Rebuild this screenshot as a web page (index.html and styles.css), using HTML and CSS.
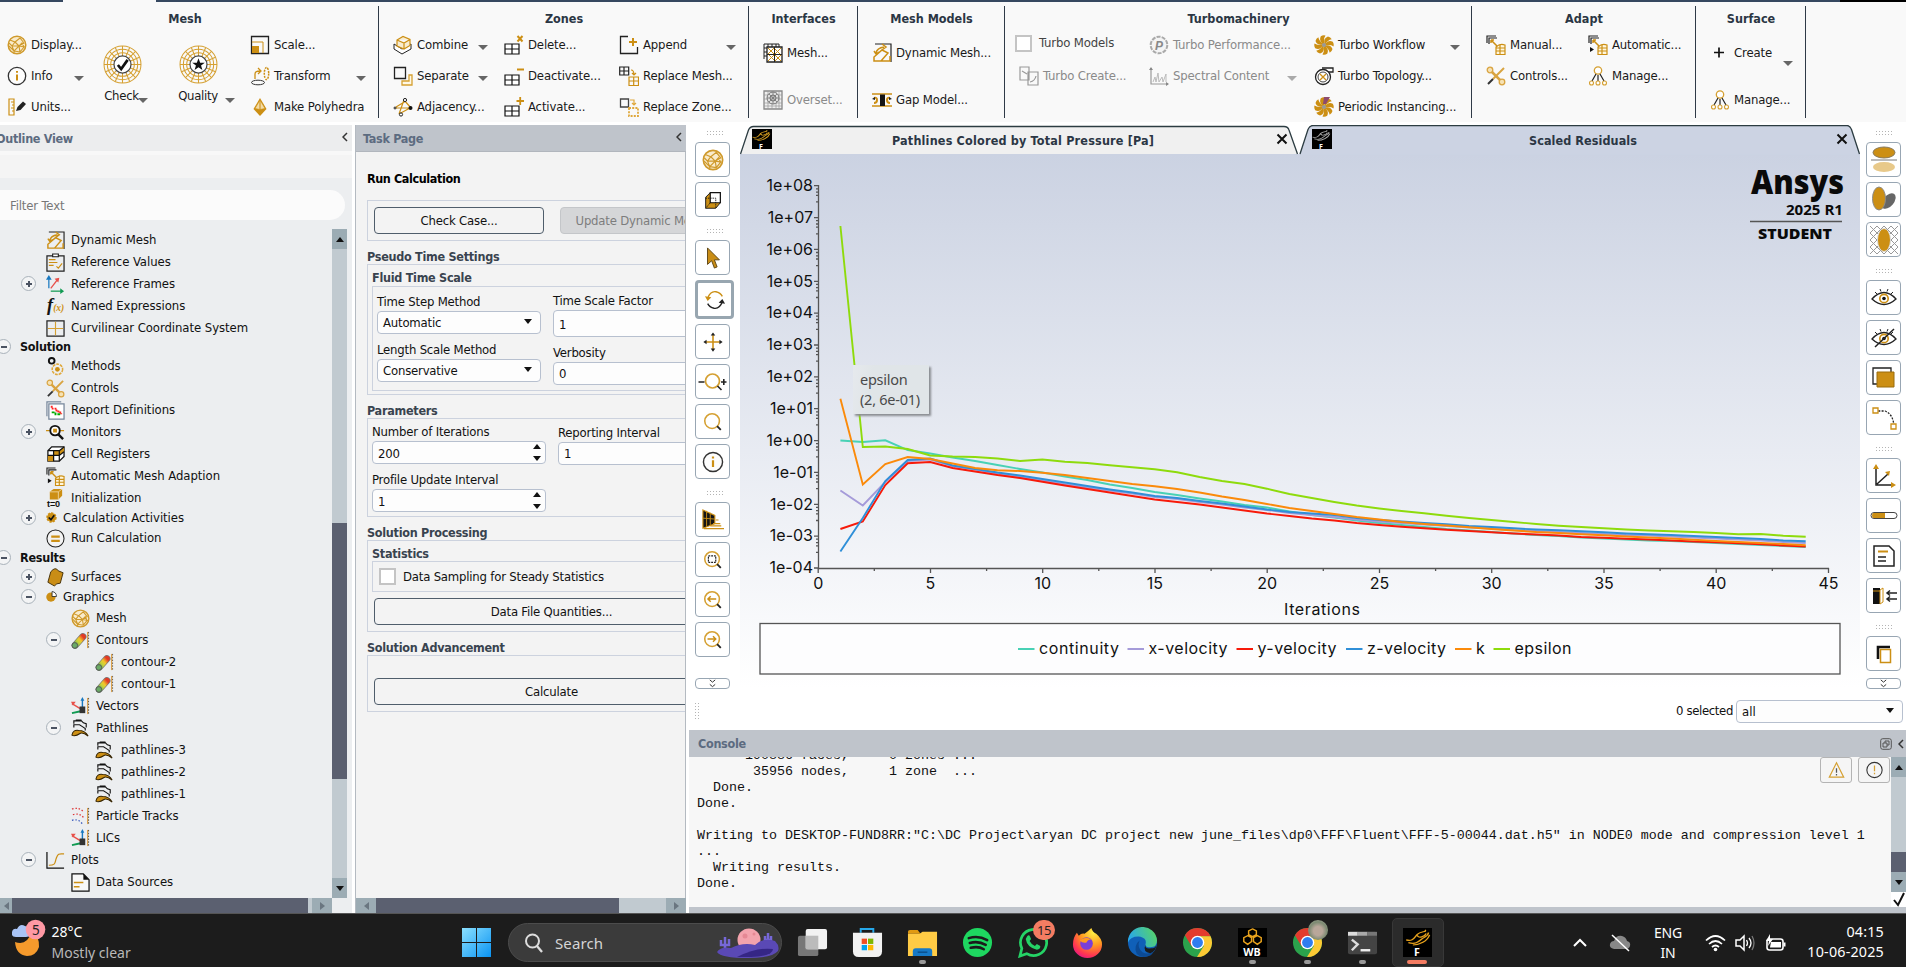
FILE: index.html
```html
<!DOCTYPE html>
<html lang="en">
<head>
<meta charset="utf-8">
<title>Fluent</title>
<link rel="stylesheet" href="styles.css">
</head>
<body>
<svg class="defs" width="0" height="0">
  <defs>
    <linearGradient id="rain" x1="0" y1="1" x2="1" y2="0"><stop offset="0" stop-color="#5fa85c"/><stop offset=".4" stop-color="#c9d33a"/><stop offset=".65" stop-color="#f3c62a"/><stop offset="1" stop-color="#e23b26"/></linearGradient>
    <g id="logo-f" fill="none" stroke-width="1.3"><path d="M2 13c6 2 7-2 10-6s9-2 7-5M4 16c7 2 9-1 12-4s6-3 6-7M8 18.500c6 0 13-4 15-11M12 8c1 4 7 1 8-2"/></g>
  </defs>
  <symbol id="mesh" viewBox="0 0 20 20"><circle cx="10" cy="10" r="8.800" fill="#f9ebcb" stroke="#cf9a2c" stroke-width="1.500"/><path d="M3 5l5 2 5-4 4 5-5 3-7 0-3-3M2 11l5 5 5-5 6 1M7 18v-2l-2-5 3-4M7 16l6 1 4-5-2-4-3 3 1 6M8 7l4 4" fill="none" stroke="#cf9a2c" stroke-width="1.100"/></symbol>
  <symbol id="info" viewBox="0 0 20 20"><circle cx="10" cy="10" r="8.700" fill="#fdfdfd" stroke="#333" stroke-width="1.300"/><path d="M10 8.500v6M10 5v1.800" stroke="#cc8f14" stroke-width="2"/></symbol>
  <symbol id="units" viewBox="0 0 20 20"><path d="M2 2h5v16H2zM4 5h3M5 8h2M4 11h3M5 14h2" fill="none" stroke="#cc8f14" stroke-width="1.200"/><path d="M9 14l1.500-4L16 4.500l3 2.500-5.500 6z" fill="#222"/></symbol>
  <symbol id="radial" viewBox="0 0 38 38"><g fill="none" stroke="#d5a032"><circle cx="19" cy="19" r="18"/><circle cx="19" cy="19" r="14.800"/><circle cx="19" cy="19" r="11.500"/><path d="M19 1v36M1 19h36M6.300 6.300l25.400 25.400M6.300 31.700L31.700 6.300M12 2.500l14 33M26 2.500l-14 33M2.500 12l33 14M2.500 26l33-14"/></g><circle cx="19" cy="19" r="8.300" fill="#fff" stroke="#444" stroke-width="1.200"/></symbol>
  <symbol id="check" viewBox="0 0 38 38"><use href="#radial"/><path d="M14.500 19.500l3.200 4L24 14.500" fill="none" stroke="#111" stroke-width="2.600"/></symbol>
  <symbol id="quality" viewBox="0 0 38 38"><use href="#radial"/><path d="M19 13l1.600 4.200 4.500.1-3.600 2.700 1.300 4.400-3.800-2.600-3.800 2.600 1.300-4.400-3.600-2.700 4.500-.1z" fill="#111"/></symbol>
  <symbol id="scale" viewBox="0 0 20 20"><path d="M1.500 1.500h17v17h-17z" fill="none" stroke="#222" stroke-width="1.300"/><path d="M2 7h11v11" fill="none" stroke="#cc8f14"/><path d="M2 11h7v7H2z" fill="#cc8f14"/></symbol>
  <symbol id="transform" viewBox="0 0 20 20"><ellipse cx="8" cy="16.500" rx="6.500" ry="2.300" fill="none" stroke="#333"/><path d="M5 13V8q0-3 5-3M8 2l3 3-3 3" fill="none" stroke="#cc8f14" stroke-width="1.300"/><ellipse cx="16.500" cy="7.500" rx="2.200" ry="6" fill="none" stroke="#cc8f14" stroke-width="1.500" stroke-dasharray="2 1"/></symbol>
  <symbol id="poly" viewBox="0 0 20 20"><path d="M10 1l6.500 11L10 19l-6.500-7z" fill="#cc8f14"/><path d="M10 3l-5 8.500 5 1zM10 3l5 8.500-5 1z" fill="#f3dca6" stroke="#cc8f14" stroke-width=".6"/></symbol>
  <symbol id="combine" viewBox="0 0 20 20"><path d="M1 9v5l8 5 9-5V9l-9 5z" fill="#fff" stroke="#222"/><path d="M4 5l6-3.500 7 3v6L11 14l-7-3zM4 5l7 3 6-3.500M11 8v6" fill="#f8ecd0" stroke="#cc8f14" stroke-width="1.200"/></symbol>
  <symbol id="separate" viewBox="0 0 20 20"><path d="M1.500 1.500h11v11h-11z" fill="none" stroke="#222" stroke-width="1.300"/><path d="M16 9h3v10H9v-4h7z" fill="#fff8e6" stroke="#d5a032" stroke-width="1.300"/></symbol>
  <symbol id="adj" viewBox="0 0 20 20"><path d="M1 11h16M11 3L6 17M11 3l7 8M3 10l10-6M6 17l11-6" stroke="#cc8f14" stroke-width="1.200" fill="none"/><g fill="#fff" stroke="#222"><circle cx="12" cy="3" r="1.600"/><circle cx="8" cy="17.500" r="1.600"/><circle cx="2" cy="11" r="1"/></g><circle cx="17.500" cy="11" r="2" fill="#111"/></symbol>
  <symbol id="g4" viewBox="0 0 20 20"><path d="M1 9h14v10H1zM8 9v10M1 14h14" fill="#fff" stroke="#111" stroke-width="1.200"/></symbol>
  <symbol id="del" viewBox="0 0 20 20"><use href="#g4"/><path d="M13.500 1l5 5.500M18.500 1l-5 5.500" stroke="#cc8f14" stroke-width="2"/></symbol>
  <symbol id="deact" viewBox="0 0 20 20"><use href="#g4"/><path d="M13 3.500h7" stroke="#cc8f14" stroke-width="2"/></symbol>
  <symbol id="act" viewBox="0 0 20 20"><use href="#g4"/><path d="M12.500 4h7.500M16.200 0v8" stroke="#cc8f14" stroke-width="1.800"/></symbol>
  <symbol id="append" viewBox="0 0 20 20"><path d="M9 1.500H1.500v17h17V12" fill="none" stroke="#222" stroke-width="1.300"/><path d="M10 7h8M14 3v8" stroke="#cc8f14" stroke-width="2"/></symbol>
  <symbol id="rmesh" viewBox="0 0 20 20"><path d="M.7 1h9v8h-9zM5 1v8M.7 5h9" fill="none" stroke="#222" stroke-width="1.200"/><path d="M10 11h9.500v8.500H10zM14.700 11v8.500M10 15h9.500M12 4q3 0 3 5M13 7l2 2 2-2" fill="none" stroke="#cc8f14" stroke-width="1.200"/></symbol>
  <symbol id="rzone" viewBox="0 0 20 20"><path d="M1.500 2h8v8h-8z" fill="none" stroke="#444" stroke-width="1.300"/><path d="M10 11h9v8h-9z" fill="none" stroke="#dfa83c" stroke-width="1.800" stroke-dasharray="2 1.200"/><path d="M11 3h4v5M13 6l2 2 2-2" fill="none" stroke="#dfa83c" stroke-width="1.200"/></symbol>
  <symbol id="imesh" viewBox="0 0 20 20"><path d="M1 16V1h15v3M1 5h3M1 9h3M1 13h3M5 1v3M9 1v3M13 1v3" fill="none" stroke="#222"/><path d="M4 4h15v15H4z" fill="#fff" stroke="#222" stroke-width="1.300"/><path d="M5 5l13 13M18 5L5 18M5 11l6-6 7 7-6 6z" fill="none" stroke="#cc8f14"/><path d="M11.500 4v15M4 11.500h15" stroke="#222"/></symbol>
  <symbol id="overset" viewBox="0 0 20 20"><path d="M1 1h18v18H1z" fill="#eee" stroke="#888" stroke-width="1.300"/><path d="M1 5h18M1 9h18M1 13h18M1 16h18M5 1v18M9 1v18M13 1v18M16 1v18" stroke="#999" stroke-width=".7"/><circle cx="10" cy="8" r="6" fill="#ddd" stroke="#777"/><path d="M4 8h12M10 2v12M6 4l8 8M14 4l-8 8" stroke="#777" stroke-width=".8"/><circle cx="10" cy="8" r="3" fill="none" stroke="#777"/></symbol>
  <symbol id="dyn" viewBox="0 0 20 20"><path d="M3 1h16v18" fill="none" stroke="#222" stroke-width="1.200"/><path d="M2 18v-4l8-7 6 3-7 8zM4 10Q5 5 12 4M10 1l4 3-4 3M2 8l2 3 3-2M18 13v5H9" fill="none" stroke="#cc8f14" stroke-width="1.500"/></symbol>
  <symbol id="gap" viewBox="0 0 20 20"><path d="M0 4h20M0 16h20" stroke="#cc8f14" stroke-width="1.500"/><path d="M2 8q3-1 3 2t-3 3M18 8q-3-1-3 2t3 3" fill="none" stroke="#cc8f14" stroke-width="2"/><path d="M8 4.500h5V16H8z" fill="#151515"/><path d="M0 9l3-2v3zM20 9l-3-2v3z" fill="#222"/></symbol>
  <symbol id="tcreate" viewBox="0 0 20 20"><path d="M1 1h9v13H1zM9 6h10v13H9zM3 5l5 3M11 16q5-1 6-6" fill="none" stroke="#999" stroke-width="1.200"/></symbol>
  <symbol id="spectral" viewBox="0 0 20 20"><path d="M2 2v16h17" fill="none" stroke="#999" stroke-width="1.200"/><path d="M4 16l2-5 1 5 2-9 1 9 3-5 1 5 3-8v8" fill="none" stroke="#bbb"/><path d="M0 4l2-3 2 3zM17 16l3 2-3 2z" fill="#888"/></symbol>
  <symbol id="turbo" viewBox="0 0 20 20"><g fill="#cc8f14"><path id="bl" d="M9.700 9Q4.500 6 6.800 1.200q2.200-1.400 4.700-.7Q9 4 10.700 9z"/><use href="#bl" transform="rotate(45 10 10)"/><use href="#bl" transform="rotate(90 10 10)"/><use href="#bl" transform="rotate(135 10 10)"/><use href="#bl" transform="rotate(180 10 10)"/><use href="#bl" transform="rotate(225 10 10)"/><use href="#bl" transform="rotate(270 10 10)"/><use href="#bl" transform="rotate(315 10 10)"/></g><circle cx="10" cy="10" r="2" fill="#999"/></symbol>
  <symbol id="periodic" viewBox="0 0 20 20"><use href="#turbo"/><path d="M10 0h6l-4 7h-3z" fill="#8d4a6e"/></symbol>
  <symbol id="topo" viewBox="0 0 20 20"><path d="M8 2h11v4h-5" fill="#fff" stroke="#222" stroke-width="1.300"/><circle cx="9" cy="11" r="7.500" fill="#fff" stroke="#222" stroke-width="1.300"/><circle cx="9" cy="11" r="5" fill="#fff" stroke="#444"/><path d="M6 8l6 6M12 8l-6 6" stroke="#cc8f14" stroke-width="1.300"/></symbol>
  <symbol id="adapt" viewBox="0 0 20 20"><path d="M1 8V1h9M3 9V3h8" fill="none" stroke="#222" stroke-width="1.200"/><path d="M5 5l6 6M5 5v3M5 5h3" stroke="#cc8f14" stroke-width="1.500"/><path d="M10 19v-7q4-4 9-2v9.500h-9zM14 9v10M10 13h9M10 16h9" fill="#fff6dd" stroke="#cc8f14" stroke-width="1.200"/></symbol>
  <symbol id="auto" viewBox="0 0 20 20"><use href="#adapt"/><path d="M2 12l4 2.500L2 17z" fill="#111"/></symbol>
  <symbol id="controls" viewBox="0 0 20 20"><path d="M4 4l12 12" stroke="#d9a441" stroke-width="2.500"/><path d="M18 2L7 13" stroke="#d9a441" stroke-width="2"/><path d="M7 13l-5 5" stroke="#333" stroke-width="2"/><g fill="#f6e2b4" stroke="#d9a441" stroke-width="1.300"><circle cx="4" cy="4" r="2.800"/><circle cx="16" cy="16" r="2.800"/></g></symbol>
  <symbol id="manage" viewBox="0 0 20 20"><circle cx="10" cy="4.500" r="3.700" fill="#fff" stroke="#d5a032" stroke-width="1.300"/><path d="M8 8l-4 7M12 8l4 7M10 9v6" stroke="#222" stroke-width="1.200"/><g fill="#fff" stroke="#d5a032" stroke-width="1.100"><circle cx="3.500" cy="17" r="2"/><circle cx="10" cy="17" r="2"/><circle cx="16.500" cy="17" r="2"/></g></symbol>
  <symbol id="plus" viewBox="0 0 20 20"><path d="M4 9.500h10M9 4.500v10" stroke="#111" stroke-width="1.700"/></symbol>
  <symbol id="refval" viewBox="0 0 20 20"><path d="M1 3h18v16H1z" fill="none" stroke="#222" stroke-width="1.300"/><path d="M7 1h6v3H7z" fill="#fff" stroke="#222" stroke-width="1.200"/><path d="M3 7h7M3 10h9M3 13h5M11 14l2 2 4-5" fill="none" stroke="#cc8f14" stroke-width="1.200"/></symbol>
  <symbol id="frames" viewBox="0 0 20 20"><path d="M3 14V4" stroke="#1878c0" stroke-width="1.300"/><path d="M0 5l3-5 3 5z" fill="#1878c0"/><path d="M5 14l7-9" stroke="#e8504a" stroke-width="1.300"/><path d="M9 4l5-1-1 5z" fill="#e8504a"/><path d="M5 17h11" stroke="#109a52" stroke-width="1.300"/><path d="M15 14l4 3-4 3z" fill="#109a52"/></symbol>
  <symbol id="curv" viewBox="0 0 20 20"><path d="M1 2h18v16H1z" fill="none" stroke="#222" stroke-width="1.300"/><path d="M10 3v14M2 10h16" stroke="#d5a032" stroke-width="1.200"/></symbol>
  <symbol id="methods" viewBox="0 0 20 20"><circle cx="6" cy="4" r="3" fill="none" stroke="#111" stroke-width="2"/><circle cx="12" cy="13" r="5.500" fill="none" stroke="#dfa83c" stroke-width="1.600" stroke-dasharray="3 1"/><circle cx="12" cy="13" r="2.500" fill="#cc8f14"/></symbol>
  <symbol id="report" viewBox="0 0 20 20"><path d="M1 16V1h15M3 3h16v16H3z" fill="#fff" stroke="#75869a" stroke-width="1.300"/><path d="M5 6h2v2h3v2h3v2h3v2" fill="none" stroke="#f22" stroke-width="2" stroke-dasharray="2 1"/><path d="M6 12h4v2h5" fill="none" stroke="#0a0" stroke-width="2" stroke-dasharray="3 1"/></symbol>
  <symbol id="monitors" viewBox="0 0 20 20"><path d="M0 8h4M15 8h4" stroke="#cc8f14" stroke-width="1.200"/><circle cx="9.500" cy="8" r="5" fill="#fff" stroke="#111" stroke-width="2"/><path d="M13 12l5 5" stroke="#111" stroke-width="2.500"/><path d="M7.500 6h4v4h-4z" fill="#cc8f14"/></symbol>
  <symbol id="cell" viewBox="0 0 20 20"><path d="M2 6l4-4h13v10l-5 5H2z" fill="#fff" stroke="#111" stroke-width="1.300"/><path d="M8 6h6v5H8zM2 11h6v6H2zM14 6l5-4v5l-5 4z" fill="#cc8f14"/><path d="M2 6h12v11M8 6v11M2 11h12l5-4M14 6l5-4" fill="none" stroke="#111" stroke-width="1.300"/></symbol>
  <symbol id="calc" viewBox="0 0 20 20"><circle cx="10" cy="10" r="8" fill="#cc8f14" stroke="#cc8f14" stroke-width="3" stroke-dasharray="4 2"/><path d="M5 10l4 4 6-8" fill="none" stroke="#111" stroke-width="3"/></symbol>
  <symbol id="run" viewBox="0 0 20 20"><circle cx="10" cy="10" r="9" fill="#f3f3f3" stroke="#222" stroke-width="1.100"/><path d="M5.500 8h9M5.500 12.500h9" stroke="#cc8f14" stroke-width="2.200"/></symbol>
  <symbol id="surf" viewBox="0 0 20 20"><path d="M5 4q5-6 8-1l5 2-3 11q-5 0-6 3l-7-4z" fill="#c98d16" stroke="#443008"/></symbol>
  <symbol id="pie" viewBox="0 0 20 20"><circle cx="9" cy="11" r="8.500" fill="#cc8f14"/><path d="M11 10V1q8 1 8 9z" fill="#fff" stroke="#222" stroke-width="1.500"/></symbol>
  <symbol id="contour" viewBox="0 0 20 20"><path d="M4.500 15L12.500 6" stroke="#777" stroke-width="7.500" stroke-linecap="round"/><path d="M4.500 15L12.500 6" stroke="url(#rain)" stroke-width="6" stroke-linecap="round"/><circle cx="4" cy="15.200" r="3" fill="#6aaa66" stroke="#555"/><path d="M18.500 1v17" stroke="#555" stroke-dasharray="1.500 1.500"/><path d="M17.500 1v17" stroke="#d9932c"/></symbol>
  <symbol id="vectors" viewBox="0 0 20 20"><path d="M1 7l10 6" stroke="#e8504a" stroke-width="1.500"/><path d="M0 5l5 0-3 4z" fill="#e8504a"/><path d="M12 12V3" stroke="#1878c0" stroke-width="1.500"/><path d="M10 4l2-4 2 4z" fill="#1878c0"/><path d="M1 17l9-2" stroke="#109a52" stroke-width="2"/><path d="M9 10h6v7H9z" fill="#333"/><path d="M18.500 1v17" stroke="#444" stroke-dasharray="1.500 1.500"/><path d="M17.500 1v17" stroke="#d9932c"/></symbol>
  <symbol id="path" viewBox="0 0 20 20"><path d="M3 5V2h8l2 2 3 1v4M3 9V6h6l3 2 3 2v2M5 1h6" fill="none" stroke="#111" stroke-width="1.200"/><path d="M1 17q1-6 7-5 7 0 10 6-5-4-8-3-6 4-9 2z" fill="#cc8f14" stroke="#332200" stroke-width="1.100"/></symbol>
  <symbol id="ptracks" viewBox="0 0 20 20"><path d="M1 2q8-2 12 3M2 8q7-2 11 3" fill="none" stroke="#d33" stroke-width="1.300" stroke-dasharray="1.500 2"/><path d="M1 14q7-2 11 4" fill="none" stroke="#35b" stroke-width="1.300" stroke-dasharray="1.500 2"/><path d="M18.500 1v17" stroke="#444" stroke-dasharray="1.500 1.500"/><path d="M17.500 1v17" stroke="#d9932c"/></symbol>
  <symbol id="plots" viewBox="0 0 20 20"><path d="M1 1v17h18" fill="none" stroke="#111" stroke-width="1.300"/><path d="M3 15c8 0 6-3 8-8s3-4 8-4" fill="none" stroke="#cc8f14" stroke-width="1.300"/></symbol>
  <symbol id="dsrc" viewBox="0 0 20 20"><path d="M1 1h12l6 6v12H1z" fill="#f8f8f8" stroke="#111" stroke-width="1.300"/><path d="M13 1v6h6z" fill="#111"/><path d="M3 10h10M3 14.500h6" stroke="#cc8f14" stroke-width="1.600"/></symbol>
  <symbol id="cube" viewBox="0 0 24 24"><path d="M4 9l5-5h11v11l-5 6H4z" fill="#cc8f14" stroke="#111"/><path d="M9 4h11v11H9z" fill="#fff" stroke="#111" stroke-width="1.300"/><path d="M4 10h11v11M9 15l-5 6" fill="none" stroke="#111" stroke-dasharray="1.500 1"/></symbol>
  <symbol id="cursor" viewBox="0 0 24 24"><path d="M6 1v18l4.500-4 3 8 3-1.300-3-7.700H19z" fill="#c98d16" stroke="#5a4210"/></symbol>
  <symbol id="rotate" viewBox="0 0 24 24"><path d="M4 10q3-8 9-7 5 1 7 5" fill="none" stroke="#cc8f14" stroke-width="1.500"/><path d="M1 8l3 5 4-4z" fill="#cc8f14"/><path d="M20 14q-3 8-9 7-5-1-7-5" fill="none" stroke="#222" stroke-width="1.500"/><path d="M23 16l-3-5-4 4z" fill="#222"/></symbol>
  <symbol id="pan" viewBox="0 0 24 24"><path d="M12 4v16M4 12h16" stroke="#cc8f14" stroke-width="1.700"/><path d="M9.500 5L12 1.500 14.500 5zM9.500 19l2.500 3.500 2.500-3.500zM5 9.500L1.500 12 5 14.500zM19 9.500l3.500 2.500-3.500 2.500z" fill="#222"/></symbol>
  <symbol id="zio" viewBox="0 0 28 24"><circle cx="14" cy="11" r="7" fill="#fff" stroke="#d5a032" stroke-width="1.700"/><path d="M19 16l4 4M0 12h6M22.500 12h5.500M25.300 9v6" stroke="#222" stroke-width="1.600"/></symbol>
  <symbol id="mag" viewBox="0 0 24 24"><circle cx="11" cy="11" r="8" fill="#fff" stroke="#d5a032" stroke-width="1.700"/><path d="M16.500 16.500l4 4" stroke="#222" stroke-width="2"/></symbol>
  <symbol id="zbox" viewBox="0 0 24 24"><use href="#mag"/><path d="M7 7.500h8v7H7z" fill="none" stroke="#222" stroke-width="1.300" stroke-dasharray="2 1"/></symbol>
  <symbol id="zl" viewBox="0 0 24 24"><use href="#mag"/><path d="M6.500 11h9M9.500 8l-3 3 3 3" fill="none" stroke="#cc8f14" stroke-width="1.600"/></symbol>
  <symbol id="zr" viewBox="0 0 24 24"><use href="#mag"/><path d="M6 11h9M12 8l3 3-3 3" fill="none" stroke="#cc8f14" stroke-width="1.600"/></symbol>
  <symbol id="persp" viewBox="0 0 24 24"><path d="M1 1l13 6v9L1 21z" fill="#151515" stroke="#cc8f14" stroke-width="1.200"/><path d="M5 2v17M9 4v14M1 10l13 1" stroke="#cc8f14"/><path d="M15 12h3M12 16h8M9 18.500h12M2 21.500h22" stroke="#cc8f14" stroke-width="1.300"/></symbol>
  <symbol id="reflect" viewBox="0 0 28 28"><ellipse cx="14" cy="6.500" rx="11" ry="5.500" fill="#cc8f14" stroke="#887a5c"/><path d="M1 14h26" stroke="#777"/><ellipse cx="14" cy="21" rx="11" ry="5" fill="#e8c98a"/></symbol>
  <symbol id="shadow" viewBox="0 0 28 28"><ellipse cx="18.500" cy="15" rx="5.500" ry="9" transform="rotate(40 18.500 15)" fill="#666"/><ellipse cx="9" cy="12.500" rx="6.500" ry="11.500" fill="#cc8f14" stroke="#8b8b8b"/></symbol>
  <symbol id="hatch" viewBox="0 0 28 28"><path d="M0 7L7 0M0 14L14 0M0 21L21 0M0 28L28 0M7 28L28 7M14 28L28 14M21 28l7-7M21 0l7 7M14 0l14 14M7 0l21 21M0 0l28 28M0 7l21 21M0 14l14 14M0 21l7 7" stroke="#999"/><ellipse cx="14" cy="14" rx="6.500" ry="11.500" fill="#cc8f14" stroke="#ddd"/></symbol>
  <symbol id="eye" viewBox="0 0 28 28"><path d="M2 15q12-13 24 0-12 11-24 0z" fill="#fff" stroke="#222" stroke-width="1.300"/><circle cx="14" cy="14.500" r="4.200" fill="#fff" stroke="#cc8f14" stroke-width="1.700"/><circle cx="14" cy="14.500" r="1.800" fill="#111"/><path d="M5 8l2 2M10 5l1 2.500M18 5l-1 2.500M23 8l-2 2" stroke="#222"/></symbol>
  <symbol id="eyeoff" viewBox="0 0 28 28"><use href="#eye"/><path d="M5 23L24 5" stroke="#222" stroke-width="1.500"/></symbol>
  <symbol id="layers" viewBox="0 0 28 28"><path d="M3 4h18v16H3z" fill="#fff" stroke="#222" stroke-width="1.300"/><path d="M7 8h17v15H7z" fill="#cc8f14" stroke="#9a6c0c"/></symbol>
  <symbol id="arc" viewBox="0 0 28 28"><path d="M5 7h10q8 3 9 15" fill="none" stroke="#222" stroke-dasharray="2 1.300" stroke-width="1.300"/><path d="M3 4h5v5H3z" fill="#fff" stroke="#cc8f14" stroke-width="1.300"/><path d="M21 20h5v5h-5z" fill="#fff" stroke="#cc8f14" stroke-width="1.300"/></symbol>
  <symbol id="axes" viewBox="0 0 28 28"><path d="M6 6v17h17M7 22l11-10" fill="none" stroke="#222" stroke-width="1.500"/><path d="M3 7l3-5 3 5zM21 20l5 3-5 3zM15 10l5-1-1 5z" fill="#cc8f14"/></symbol>
  <symbol id="slide" viewBox="0 0 28 28"><rect x="1" y="10.500" width="26" height="6" rx="3" fill="#fff" stroke="#444"/><path d="M3 11h12v5H3q-2-2.500 0-5z" fill="#cc8f14"/></symbol>
  <symbol id="note" viewBox="0 0 28 28"><path d="M4 4h15l5 5v15H4z" fill="#fff" stroke="#222" stroke-width="1.500"/><path d="M8 9.500h10" stroke="#cc8f14" stroke-width="2"/><path d="M8 15h8M8 19h8" stroke="#222" stroke-width="1.500"/></symbol>
  <symbol id="door" viewBox="0 0 28 28"><path d="M3 6h7v16H3z" fill="#111"/><path d="M10 8l3-2v14l-3 2zM3 9h7" fill="none" stroke="#cc8f14"/><path d="M27 11H17M27 17H17M20 8.500L17 11l3 2.500M20 14.500L17 17l3 2.500" fill="none" stroke="#222" stroke-width="1.500"/></symbol>
  <symbol id="copy" viewBox="0 0 28 28"><path d="M8 19V7h12" fill="none" stroke="#111" stroke-width="2.600"/><path d="M10.500 9.500h10v13h-10z" fill="#fff" stroke="#cc8f14" stroke-width="1.500"/></symbol>
  <symbol id="warn" viewBox="0 0 20 20"><path d="M10 2l8 16H2z" fill="none" stroke="#d5a032" stroke-width="1.300"/><path d="M10 8v5M10 14.500v1.500" stroke="#555" stroke-width="1.400"/></symbol>
  <symbol id="alert" viewBox="0 0 20 20"><circle cx="10" cy="10" r="8.500" fill="none" stroke="#333" stroke-width="1.200"/><path d="M10 5v6.500M10 13v1.800" stroke="#d5a032" stroke-width="1.400"/></symbol>
  <symbol id="dbl" viewBox="0 0 10 10"><path d="M2 1l3 2.500L8 1M2 6l3 2.500L8 6" fill="none" stroke="#333" stroke-width="1.100"/></symbol>
  <symbol id="chrome" viewBox="0 0 32 32"><circle cx="16" cy="16" r="15" fill="#2ba24c"/><path d="M3 8.500A15 15 0 0 1 29.500 9.500L16 9.500 10 20z" fill="#e33b2e"/><path d="M29.500 9.500A15 15 0 0 1 15.500 31L22.500 19.500 16 9.500z" fill="#fcc934"/><circle cx="16" cy="16" r="7" fill="#fff"/><circle cx="16" cy="16" r="5.600" fill="#2f7df0"/></symbol>
</svg>

<div class="strip"><i class="s1"></i><i class="s2"></i><i class="s3"></i></div>

<header class="ribbon">
  <section class="grp g-mesh"><h2>Mesh</h2><div class="cols">
    <div class="col w-a"><div class="cmd"><svg><use href="#mesh"/></svg><span>Display...</span></div><div class="cmd"><svg><use href="#info"/></svg><span>Info</span><b></b></div><div class="cmd"><svg><use href="#units"/></svg><span>Units...</span></div></div>
    <div class="big bg1"><svg><use href="#check"/></svg><div><span>Check</span><b></b></div></div>
    <div class="big bg2"><svg><use href="#quality"/></svg><div><span>Quality</span><b></b></div></div>
    <div class="col w-b"><div class="cmd"><svg><use href="#scale"/></svg><span>Scale...</span></div><div class="cmd"><svg><use href="#transform"/></svg><span>Transform</span><b></b></div><div class="cmd"><svg><use href="#poly"/></svg><span>Make Polyhedra</span></div></div>
  </div></section>
  <section class="grp g-zones"><h2>Zones</h2><div class="cols">
    <div class="col w-c"><div class="cmd"><svg><use href="#combine"/></svg><span>Combine</span><b></b></div><div class="cmd"><svg><use href="#separate"/></svg><span>Separate</span><b></b></div><div class="cmd"><svg><use href="#adj"/></svg><span>Adjacency...</span></div></div>
    <div class="col w-d"><div class="cmd"><svg><use href="#del"/></svg><span>Delete...</span></div><div class="cmd"><svg><use href="#deact"/></svg><span>Deactivate...</span></div><div class="cmd"><svg><use href="#act"/></svg><span>Activate...</span></div></div>
    <div class="col w-e"><div class="cmd"><svg><use href="#append"/></svg><span>Append</span><b></b></div><div class="cmd"><svg><use href="#rmesh"/></svg><span>Replace Mesh...</span></div><div class="cmd"><svg><use href="#rzone"/></svg><span>Replace Zone...</span></div></div>
  </div></section>
  <section class="grp g-int"><h2>Interfaces</h2><div class="cols"><div class="col two"><div class="cmd"><svg><use href="#imesh"/></svg><span>Mesh...</span></div><div class="cmd off"><svg><use href="#overset"/></svg><span>Overset...</span></div></div></div></section>
  <section class="grp g-mm"><h2>Mesh Models</h2><div class="cols"><div class="col two"><div class="cmd"><svg><use href="#dyn"/></svg><span>Dynamic Mesh...</span></div><div class="cmd"><svg><use href="#gap"/></svg><span>Gap Model...</span></div></div></div></section>
  <section class="grp g-turbo"><h2>Turbomachinery</h2><div class="cols">
    <div class="col w-f"><div class="cmd tm"><i class="cb"></i><span>Turbo Models</span></div><div class="cmd off tc"><svg><use href="#tcreate"/></svg><span>Turbo Create...</span></div></div>
    <div class="col w-g"><div class="cmd off"><svg viewBox="0 0 20 20"><circle cx="10" cy="10" r="8.300" fill="#f4f4f4" stroke="#aaa" stroke-width="2" stroke-dasharray="4 1.200"/><text class="pi" x="6" y="14.500">P</text></svg><span>Turbo Performance...</span></div><div class="cmd off"><svg><use href="#spectral"/></svg><span>Spectral Content</span><b></b></div></div>
    <div class="col w-h"><div class="cmd"><svg><use href="#turbo"/></svg><span>Turbo Workflow</span><b></b></div><div class="cmd"><svg><use href="#topo"/></svg><span>Turbo Topology...</span></div><div class="cmd"><svg><use href="#periodic"/></svg><span>Periodic Instancing...</span></div></div>
  </div></section>
  <section class="grp g-adapt"><h2>Adapt</h2><div class="cols">
    <div class="col w-i"><div class="cmd"><svg><use href="#adapt"/></svg><span>Manual...</span></div><div class="cmd"><svg><use href="#controls"/></svg><span>Controls...</span></div></div>
    <div class="col"><div class="cmd"><svg><use href="#auto"/></svg><span>Automatic...</span></div><div class="cmd"><svg><use href="#manage"/></svg><span>Manage...</span></div></div>
  </div></section>
  <section class="grp g-surf"><h2>Surface</h2><div class="cols"><div class="col two"><div class="cmd"><svg><use href="#plus"/></svg><span>Create</span><b></b></div><div class="cmd"><svg><use href="#manage"/></svg><span>Manage...</span></div></div></div></section>
</header>

<main class="work">
  <aside class="outline">
    <div class="phead"><span>Outline View</span><svg class="chev" viewBox="0 0 6 10"><path d="M5 1L1 5l4 4"/></svg></div>
    <div class="obar"></div>
    <div class="ofilter"><div class="filter">Filter Text</div></div>
    <div class="otree">
      <ul class="tree">
        <li class="l1"><svg><use href="#dyn"/></svg>Dynamic Mesh</li>
        <li class="l1"><svg><use href="#refval"/></svg>Reference Values</li>
        <li class="l1"><i class="tg p"></i><svg><use href="#frames"/></svg>Reference Frames</li>
        <li class="l1"><svg viewBox="0 0 20 20"><text class="ff" x="1" y="15">f</text><text class="fxx" x="7.500" y="15">(x)</text></svg>Named Expressions</li>
        <li class="l1"><svg><use href="#curv"/></svg>Curvilinear Coordinate System</li>
        <li class="l0 sol"><i class="tg"></i>Solution</li>
        <li class="l1"><svg><use href="#methods"/></svg>Methods</li>
        <li class="l1"><svg><use href="#controls"/></svg>Controls</li>
        <li class="l1"><svg><use href="#report"/></svg>Report Definitions</li>
        <li class="l1"><i class="tg p"></i><svg><use href="#monitors"/></svg>Monitors</li>
        <li class="l1"><svg><use href="#cell"/></svg>Cell Registers</li>
        <li class="l1"><svg><use href="#auto"/></svg>Automatic Mesh Adaption</li>
        <li class="l1"><svg viewBox="0 0 20 20"><path d="M4 3l4-3h9v7l-4 4H4z" fill="#cc8f14"/><path d="M4 3h9l4-3M13 3v8" fill="none" stroke="#f6e2b4" stroke-width=".8"/><text class="t0" x="1" y="19">t=0</text></svg>Initialization</li>
        <li class="l1 sm h18"><i class="tg p"></i><svg><use href="#calc"/></svg>Calculation Activities</li>
        <li class="l1"><svg><use href="#run"/></svg>Run Calculation</li>
        <li class="l0 res"><i class="tg"></i>Results</li>
        <li class="l1 h20"><i class="tg p"></i><svg><use href="#surf"/></svg>Surfaces</li>
        <li class="l1 sm h20"><i class="tg"></i><svg><use href="#pie"/></svg>Graphics</li>
        <li class="l2"><svg><use href="#mesh"/></svg>Mesh</li>
        <li class="l2"><i class="tg"></i><svg><use href="#contour"/></svg>Contours</li>
        <li class="l3"><svg><use href="#contour"/></svg>contour-2</li>
        <li class="l3"><svg><use href="#contour"/></svg>contour-1</li>
        <li class="l2"><svg><use href="#vectors"/></svg>Vectors</li>
        <li class="l2"><i class="tg"></i><svg><use href="#path"/></svg>Pathlines</li>
        <li class="l3"><svg><use href="#path"/></svg>pathlines-3</li>
        <li class="l3"><svg><use href="#path"/></svg>pathlines-2</li>
        <li class="l3"><svg><use href="#path"/></svg>pathlines-1</li>
        <li class="l2"><svg><use href="#ptracks"/></svg>Particle Tracks</li>
        <li class="l2"><svg><use href="#vectors"/></svg>LICs</li>
        <li class="l1"><i class="tg"></i><svg><use href="#plots"/></svg>Plots</li>
        <li class="l2"><svg><use href="#dsrc"/></svg>Data Sources</li>
      </ul>
      <div class="vbar"><i class="ar up"></i><i class="thumb"></i><i class="ar dn"></i></div>
    </div>
    <div class="hbar o"><i class="ar lf"></i><i class="thumb"></i><i class="gap"></i><i class="ar rt"></i></div>
  </aside>

  <aside class="task">
    <div class="phead"><span>Task Page</span><svg class="chev" viewBox="0 0 6 10"><path d="M5 1L1 5l4 4"/></svg></div>
    <div class="tbody"><div class="tin">
      <h3 class="first">Run Calculation</h3>
      <div class="box b1"><div class="btn">Check Case...</div><div class="btn dis">Update Dynamic Mesh...</div></div>
      <h3>Pseudo Time Settings</h3>
      <div class="box b2"><h4>Fluid Time Scale</h4>
        <div class="ibox cols2">
          <div class="fc c1"><label>Time Step Method</label><div class="inp sel">Automatic<i></i></div><label>Length Scale Method</label><div class="inp sel">Conservative<i></i></div></div>
          <div class="fc c2"><label>Time Scale Factor</label><div class="inp tall">1</div><label>Verbosity</label><div class="inp">0</div></div>
        </div></div>
      <h3>Parameters</h3>
      <div class="box b3 cols2">
        <div class="fc c3"><label>Number of Iterations</label><div class="inp spin">200<i></i></div><label>Profile Update Interval</label><div class="inp spin">1<i></i></div></div>
        <div class="fc c4"><label>Reporting Interval</label><div class="inp">1</div></div>
      </div>
      <h3>Solution Processing</h3>
      <div class="box b4"><h4 class="st">Statistics</h4><div class="ibox ck"><i class="cb"></i>Data Sampling for Steady Statistics</div><div class="btn wide">Data File Quantities...</div></div>
      <h3>Solution Advancement</h3>
      <div class="box b5"><div class="btn wide">Calculate</div></div>
    </div></div>
    <div class="hbar t"><i class="ar lf"></i><i class="thumb"></i><i class="gap"></i><i class="ar rt"></i></div>
  </aside>

  <div class="right">
    <div class="gfx">
      <div class="tools">
        <i class="grip g0"></i>
        <div class="tb"><svg><use href="#mesh"/></svg></div><div class="tb"><svg><use href="#cube"/></svg></div>
        <i class="grip"></i>
        <div class="tb"><svg><use href="#cursor"/></svg></div><div class="tb on"><svg><use href="#rotate"/></svg></div><div class="tb"><svg><use href="#pan"/></svg></div><div class="tb w"><svg><use href="#zio"/></svg></div><div class="tb"><svg><use href="#mag"/></svg></div><div class="tb"><svg><use href="#info"/></svg></div>
        <i class="grip"></i>
        <div class="tb"><svg><use href="#persp"/></svg></div><div class="tb"><svg><use href="#zbox"/></svg></div><div class="tb"><svg><use href="#zl"/></svg></div><div class="tb"><svg><use href="#zr"/></svg></div>
        <div class="more m1"><svg><use href="#dbl"/></svg></div>
      </div>
      <div class="canvas">
        <svg id="plot" viewBox="740 125 1126 565" width="1126" height="565">
          <defs><linearGradient id="bg" x1="0" y1="0" x2="0" y2="1"><stop offset="0" stop-color="#cbd2e2"/><stop offset="1" stop-color="#ffffff"/></linearGradient></defs>
          <rect x="740" y="154" width="1120" height="534" fill="url(#bg)"/>
          <path d="M740 154l8-24q1.500-3.500 5-3.500H1276q3 0 4 3.500l8 24z" fill="#f0f0f0"/>
          <path d="M740.500 154l8-24q1.500-3.500 5-3.500H1284q4 0 5 3.500l8.500 24" fill="#f0f0f0" stroke="#2c3c42" stroke-width="1.300"/>
          <path d="M1300 154.500l8-25q1.500-4 5-4H1847q3 0 4.500 4l8 25z" fill="#ccd3e3"/>
          <path d="M1300 154l8-24.500q1.500-4 5-4H1847q3 0 4.500 4l8 24.500" fill="none" stroke="#2c3c42" stroke-width="1.300"/>
          <path d="M752 129h20v20h-20z M1312 129h20v20h-20z" fill="#000"/>
          <use href="#logo-f" transform="translate(751 129) scale(.82 .62)" stroke="#d9a020"/><use href="#logo-f" transform="translate(1311 129) scale(.82 .62)" stroke="#aaa"/>
          <g class="tiny"><text x="759" y="149">F</text><text x="1319" y="149">F</text></g>
          <g class="tabt"><text x="1023" y="145" text-anchor="middle" textLength="262">Pathlines Colored by Total Pressure [Pa]</text><text x="1583" y="145" text-anchor="middle" textLength="108">Scaled Residuals</text></g>
          <path d="M1277.500 134.500l9 9M1286.500 134.500l-9 9M1837.500 134.500l9 9M1846.500 134.500l-9 9" stroke="#111" stroke-width="2"/>
          <g id="axes-layer"></g><g id="series"></g>
          <rect x="760" y="623.500" width="1080" height="50.500" fill="#fdfdfe" stroke="#555" stroke-width="1.300"/>
          <g id="legend" class="ax"></g>
          <g class="brand"><text x="1751" y="194" class="an" textLength="93" lengthAdjust="spacingAndGlyphs">Ansys</text><text x="1843" y="215" class="yr" text-anchor="end" textLength="57" lengthAdjust="spacingAndGlyphs">2025 R1</text><path d="M1750 221.500h92" stroke="#555" stroke-width="1.500"/><text x="1758" y="239" class="stu" textLength="74" lengthAdjust="spacingAndGlyphs">STUDENT</text></g>
        </svg>
        <div class="tip">epsilon<br>(2, 6e-01)</div>
      </div>
      <div class="tools r">
        <i class="grip g0"></i>
        <div class="tb"><svg><use href="#reflect"/></svg></div><div class="tb"><svg><use href="#shadow"/></svg></div><div class="tb"><svg><use href="#hatch"/></svg></div>
        <i class="grip"></i>
        <div class="tb"><svg><use href="#eye"/></svg></div><div class="tb"><svg><use href="#eyeoff"/></svg></div><div class="tb"><svg><use href="#layers"/></svg></div><div class="tb"><svg><use href="#arc"/></svg></div>
        <i class="grip"></i>
        <div class="tb"><svg><use href="#axes"/></svg></div><div class="tb"><svg><use href="#slide"/></svg></div><div class="tb"><svg><use href="#note"/></svg></div><div class="tb"><svg><use href="#door"/></svg></div>
        <i class="grip"></i>
        <div class="tb"><svg><use href="#copy"/></svg></div>
        <div class="more m2"><svg><use href="#dbl"/></svg></div>
      </div>
    </div>
    <div class="selrow"><i class="vgrip"></i><span>0 selected</span><div class="inp sel">all<i></i></div></div>
    <div class="console">
      <div class="phead"><span>Console</span><svg class="pop" viewBox="0 0 12 12"><rect x=".7" y=".7" width="10.600" height="10.600" rx="2"/><path d="M3 5h4v4H3zM5 5V3h4v4H7"/></svg><svg class="chev" viewBox="0 0 6 10"><path d="M5 1L1 5l4 4"/></svg></div>
      <div class="cbody">
        <pre>      190886 faces,     0 zones ...
       35956 nodes,     1 zone  ...
  Done.
Done.

Writing to DESKTOP-FUND8RR:"C:\DC Project\aryan DC project new june_files\dp0\FFF\Fluent\FFF-5-00044.dat.h5" in NODE0 mode and compression level 1
...
  Writing results.
Done.</pre>
        <div class="cbtns"><div><svg><use href="#warn"/></svg></div><div><svg><use href="#alert"/></svg></div></div>
        <div class="vbar c"><i class="ar up"></i><i class="thumb"></i><i class="ar dn"></i><i class="okc"><svg viewBox="0 0 14 15"><path d="M3 8l4 5 6-12" fill="none" stroke="#111" stroke-width="2"/></svg></i></div>
      </div>
    </div>
  </div>
</main>

<footer class="bar">
  <div class="weather"><svg width="36" height="40" viewBox="0 0 36 40"><path d="M3 23q12 4 16-9 9 4 8 14-3 9-12 9Q4 36 3 23z" fill="#f59a2c"/><path d="M4 18q-5 0-4-5 1-4 5-3 3-6 8-3 4 1 3 5 3 1 2 4-1 2-4 2z" fill="#a9c4f5"/><circle cx="23.500" cy="10.500" r="9.800" fill="#ff99a4"/><text class="wn" x="20" y="15.500">5</text></svg><div class="wt">28°C<br><em>Mostly clear</em></div></div>
  <div class="apps">
    <svg class="win" viewBox="0 0 29 29"><defs><linearGradient id="wg" x1="0" y1="0" x2="1" y2="1"><stop offset="0" stop-color="#8be0ff"/><stop offset="1" stop-color="#0a93f2"/></linearGradient></defs><path d="M0 0h14v14H0zM15 0h14v14H15zM0 15h14v14H0zM15 15h14v14H15z" fill="url(#wg)"/></svg>
    <div class="search"><svg width="20" height="20" viewBox="0 0 20 20"><circle cx="8.500" cy="8" r="6.500" fill="none" stroke="#ddd" stroke-width="2"/><path d="M13 13l5 6" stroke="#ddd" stroke-width="2.300"/></svg><span>Search</span>
      <svg class="art" width="62" height="30" viewBox="0 0 62 30"><circle cx="32" cy="12" r="11.500" fill="#f3a3ad"/><circle cx="28" cy="8" r="2.500" fill="#e58894"/><circle cx="37" cy="6" r="1.500" fill="#e58894"/><path d="M8 22V9M4 12v5h8v-6M51 16V5M48 8v4h6V8" fill="none" stroke="#7668d8" stroke-width="2.500"/><path d="M0 24q4-6 14-4 12-6 24-3 8-8 20-4 5 5 3 10-6 7-30 7Q4 30 0 24z" fill="#5a49b5"/><path d="M20 29q20-10 36-8 0 7-22 8z" fill="#352685"/></svg></div>
    <svg class="ap tv" viewBox="0 0 32 32"><rect x="1" y="9" width="21" height="21" rx="2" fill="#777"/><rect x="9" y="2" width="22" height="21" rx="2" fill="#f2f2f2"/><path d="M9 9h13v14H9z" fill="#bbb"/></svg>
    <svg class="ap store" viewBox="0 0 32 32"><path d="M9 6V2h13v4" fill="none" stroke="#26a8ea" stroke-width="2"/><path d="M1 6h30v19q0 6-6 6H7q-6 0-6-6z" fill="#f2f2f2"/><path d="M10 12h5.500v5.500H10z" fill="#f04e23"/><path d="M16.500 12H22v5.500h-5.500z" fill="#7db701"/><path d="M10 18.500h5.500V24H10z" fill="#00a1ef"/><path d="M16.500 18.500H22V24h-5.500z" fill="#fdb900"/></svg>
    <div class="ap dot"><svg viewBox="0 0 32 32"><path d="M1 5q0-2 2-2h8l3 4H1z" fill="#e09a12"/><path d="M1 7h12l3-2h15v25H1z" fill="#ffcb45"/><path d="M6 30v-5q0-3 3-3h14q3 0 3 3v5z" fill="#1679c6"/><path d="M11 26h10" stroke="#0a4f8c" stroke-width="1.500"/></svg></div>
    <svg class="ap" viewBox="0 0 32 32"><circle cx="16" cy="16" r="15" fill="#1ed760"/><path d="M7 11.500q10-3 19 2M8 16.500q9-2.500 16.500 2M9 21.500q8-2 13.500 1.500" fill="none" stroke="#1b1b1b" stroke-width="2.600" stroke-linecap="round"/></svg>
    <div class="ap wa"><svg viewBox="0 0 32 32"><path d="M3 30l2-8A13.500 13.500 0 1 1 10 27.500z" fill="none" stroke="#25d366" stroke-width="2.800"/><path d="M10.500 9.500q2-2 3 .5l1 2.500-1.500 2q2 4 5.500 5l2-2 3.500 2q.5 3-3.500 4-10-2-11.500-11z" fill="#25d366"/></svg><span class="badge">15</span></div>
    <svg class="ap" viewBox="0 0 32 32"><defs><radialGradient id="ff" cx=".7" cy=".15" r=".95"><stop offset="0" stop-color="#fff044"/><stop offset=".45" stop-color="#ff9a1f"/><stop offset=".8" stop-color="#ff3750"/><stop offset="1" stop-color="#e31587"/></radialGradient></defs><path d="M20 1q1 4 5 6 6 5 6 11a15 14 0 0 1-30 0Q1 11 5 6l2 3q3-3 6-2 4-3 7-6z" fill="url(#ff)"/><circle cx="15" cy="17" r="6.500" fill="#7a3fd8"/><path d="M8 14q6-5 12-1-4 0-5 3-4 1-7-2z" fill="#ff9a1f"/></svg>
    <svg class="ap" viewBox="0 0 32 32"><defs><linearGradient id="eg" x1="0" y1=".3" x2="1" y2="0"><stop offset="0" stop-color="#2aa9e6"/><stop offset="1" stop-color="#5bd85c"/></linearGradient></defs><circle cx="16" cy="16" r="15" fill="#1060b8"/><path d="M1 16A15 15 0 0 1 31 14q0 7-7 7-5 0-5-3 2-6-5-8Q4 9 1 16z" fill="url(#eg)"/><path d="M13 14q-3 7 3 12 5 3 11-.5-1 5-10 5.500Q7 29 9 20q1-4 4-6z" fill="#0c4a94"/><path d="M19 18q-1 5 6 4 4 0 5-3 0 6-6 8-8-1-5-9z" fill="#1b1b1b"/></svg>
    <svg class="ap"><use href="#chrome"/></svg>
    <div class="ap dot"><svg viewBox="0 0 32 32"><path d="M1 1h30v30H1z" fill="#000"/><g fill="none" stroke="#e8a21c" stroke-width="1.500"><path d="M16 2l4 2v4l-4 2-4-2V4zM11 9l4 2v4l-4 3-4-3v-4zM21 9l4 2v4l-4 3-4-3v-4z"/></g><text class="wb" x="6.500" y="30">WB</text></svg></div>
    <div class="ap dot"><svg viewBox="0 0 32 32"><use href="#chrome"/></svg><i class="av"></i></div>
    <div class="ap dot"><svg viewBox="0 0 32 32"><rect x="1" y="5" width="30" height="23" rx="2" fill="#444"/><path d="M1 5h10v4H1z" fill="#ddd"/><path d="M11 5h10v4H11z" fill="#aaa"/><path d="M21 5h10v4H21z" fill="#777"/><path d="M5 13l6 5-6 6" fill="none" stroke="#ddd" stroke-width="2.500"/><path d="M14 24h10" stroke="#eee" stroke-width="2.500"/></svg></div>
    <div class="ap active"><svg viewBox="0 0 32 32"><path d="M1 1h30v30H1z" fill="#000"/><use href="#logo-f" transform="translate(2 1) scale(1.150 .95)" stroke="#e8a21c"/><text class="wb" x="12.500" y="30">F</text></svg></div>
  </div>
  <div class="tray">
    <svg width="16" height="10" viewBox="0 0 16 10"><path d="M2 8l6-6 6 6" fill="none" stroke="#fff" stroke-width="2"/></svg>
    <svg class="cloud" width="22" height="18" viewBox="0 0 22 18"><path d="M5 15q-5-1-4-5 1-3 4-3 2-6 8-5 4 1 5 5 4 1 3 5-1 3-4 3z" fill="#888"/><path d="M3 1l17 16" stroke="#fff" stroke-width="1.500"/></svg>
    <div class="lang">ENG<br>IN</div>
    <svg class="wifi" width="21" height="18" viewBox="0 0 21 18"><path d="M1 6.500q9.500-9 19 0M4 10q6.500-6 13 0M7 13q3.500-3 7 0" fill="none" stroke="#fff" stroke-width="1.700"/><circle cx="10.500" cy="15.500" r="1.800" fill="#fff"/></svg>
    <svg class="spk" width="20" height="18" viewBox="0 0 20 18"><path d="M1 6h4l4-4v14l-4-4H1z" fill="none" stroke="#fff" stroke-width="1.500"/><path d="M11.500 6q2 3 0 6M14 4q4 5 0 10" fill="none" stroke="#fff" stroke-width="1.300"/><path d="M17 2q4 7 0 14" fill="none" stroke="#777" stroke-width="1.300"/></svg>
    <svg class="bat" width="21" height="18" viewBox="0 0 21 18"><rect x="2" y="5" width="16" height="11" rx="2.500" fill="none" stroke="#fff" stroke-width="1.600"/><path d="M6 8h10v5.500H5z" fill="#fff"/><path d="M19.500 8.500v4" stroke="#fff" stroke-width="2"/><path d="M5 0L1 7h3l-1 5 5-7H5z" fill="#fff"/></svg>
    <div class="clock">04:15<br>10-06-2025</div>
  </div>
</footer>
<script src="chart.js"></script>
</body>
</html>
```

FILE: styles.css
```css
* { box-sizing: border-box; }
body { margin: 0; width: 1906px; height: 967px; overflow: hidden; background: #fff; color: #111; font: 13px/16px "DejaVu Sans Condensed", "DejaVu Sans", sans-serif; display: flex; flex-direction: column; }
h2, h3, h4, ul, pre { margin: 0; padding: 0; }
i, em { font-style: normal; }
i { display: block; }
.defs { position: absolute; }

.strip { height: 2px; display: flex; background: #f9f9f9; flex: none; }
.s1 { width: 63px; background: #364860; }
.s2 { margin-left: 93px; width: 1684px; background: #364860; }
.s3 { width: 66px; background: #000; }

.ribbon { height: 120px; flex: none; display: flex; background: #f9f9f9; color: #1a1a1a; }
.grp { position: relative; display: flex; flex-direction: column; flex: none; height: 116px; background: linear-gradient(#2f3a47, #2f3a47) right 4px / 1px 112px no-repeat; }
.grp h2 { font-size: 12.500px; line-height: 16px; margin-top: 9px; font-weight: 700; text-align: center; color: #2b3644; letter-spacing: 0; }
.cols { display: flex; margin-top: 2px; }
.col { display: flex; flex-direction: column; flex: none; }
.cmd { display: flex; align-items: center; height: 31px; white-space: nowrap; letter-spacing: -.15px; }
.cmd svg { width: 20px; height: 20px; margin-right: 4px; flex: none; }
.cmd b, .big b { width: 0; height: 0; border: 5px solid transparent; border-top: 5px solid #666; border-bottom: 0; margin-left: auto; margin-top: 5px; flex: none; }
.off { color: #8a8a8a; }
.off b { border-top-color: #aaa; }
.two .cmd { height: 47px; }
.pi { font: italic 700 12px "Liberation Sans", sans-serif; fill: #888; }
.g-mesh { width: 379px; } .g-mesh h2 { padding-right: 9px; }
.w-a { margin-left: 7px; width: 77px; }
.big { display: flex; flex-direction: column; align-items: center; padding-top: 16px; }
.big svg { width: 39px; height: 39px; }
.big div { display: flex; align-items: center; margin-top: 4px; letter-spacing: -.3px; }
.big b { margin: 9px 0 0; }
.bg1 { margin-left: 19px; width: 46px; } .bg1 svg { margin-right: 8px; } .bg1 b { margin-left: -1px; }
.bg2 { margin-left: 28px; width: 59px; } .bg2 svg { margin-right: 16px; } .bg2 b { margin-left: 7px; }
.w-b { margin-left: 14px; width: 116px; }
.g-zones { width: 370px; }
.w-c { margin-left: 14px; width: 95px; }
.w-d { margin-left: 16px; width: 105px; }
.w-e { margin-left: 10px; width: 117px; }
.g-int { width: 109px; } .g-int .col { margin-left: 14px; }
.g-mm { width: 147px; } .g-mm .col { margin-left: 14px; }
.g-turbo { width: 467px; }
.w-f { margin-left: 10px; width: 130px; }
.cb { width: 17px; height: 17px; border: 2px solid #c4c4c4; background: #fff; flex: none; margin-right: 7px; }
.tm { color: #444; padding-bottom: 3px; }
.tc { padding-left: 4px; }
.w-g { margin-left: 4px; width: 148px; }
.w-h { margin-left: 17px; width: 146px; }
.g-adapt { width: 224px; }
.w-i { margin-left: 14px; width: 102px; }
.g-surf { width: 110px; } .g-surf .col { margin-left: 14px; width: 83px; }
.g-surf .cmd b { margin-top: 22px; margin-left: 0; }
.g-surf .cmd span { flex: 1; }

.work { height: 788px; margin-top: 3px; flex: none; display: flex; }
.phead { height: 27px; display: flex; align-items: center; font-size: 12.500px; font-weight: 700; color: #5c6b80; flex: none; letter-spacing: -.3px; }
.chev { width: 6px; height: 10px; fill: none; stroke: #333; stroke-width: 1.500; margin-left: auto; }
.outline { width: 352px; height: 788px; overflow: hidden; background: #eceef0; margin-right: 3px; flex: none; display: flex; flex-direction: column; }
.outline .phead { height: 26px; background: #ecedee; padding-right: 4px; padding-top: 2px; }
.outline .phead span { margin-left: -4px; }
.outline .chev { margin-bottom: 4px; }
.obar { height: 27px; border-top: 4px solid #f8f8f8; background: #f4f4f4; flex: none; }
.ofilter { height: 51px; padding-top: 12px; flex: none; }
.filter { width: 345px; height: 30px; border-radius: 0 15px 15px 0; background: #fbfbfb; color: #777; padding-left: 10px; line-height: 32px; letter-spacing: -.15px; }
.otree { display: flex; height: 669px; width: 347px; flex: none; }
.tree { width: 332px; list-style: none; overflow: hidden; }
.tree li { display: flex; align-items: center; height: 22px; line-height: 26px; position: relative; white-space: nowrap; letter-spacing: -.06px; }
.tree svg { width: 19px; height: 19px; margin-right: 6px; flex: none; }
.ff { font: italic 700 19px "Liberation Serif", serif; fill: #111; }
.fxx { font: italic 700 10px "Liberation Serif", serif; fill: #cc8f14; letter-spacing: 0; }
.t0 { font: 700 9.500px "Liberation Sans", sans-serif; fill: #111; }
.tree .l0 { padding-left: 20px; font-weight: 700; font-size: 12.500px; letter-spacing: -.25px; }
.tree .l1 { padding-left: 46px; }
.tree .l2 { padding-left: 71px; }
.tree .l3 { padding-left: 95px; }
.tree .l3 svg { margin-right: 7px; }
.tree .sm svg { width: 11px; height: 11px; margin-bottom: 1px; }
.tree .sol { height: 16px; } .tree .res { height: 18px; } .tree .h18 { height: 18px; } .tree .h20 { height: 20px; }
.tg { position: absolute; left: -4px; top: 50%; width: 15px; height: 15px; margin-top: -8px; border: 1.500px solid #a9b2ba; border-radius: 50%; background: linear-gradient(#4b5362, #4b5362) center / 6px 2px no-repeat #f3f4f5; }
.tg.p { background: linear-gradient(#4b5362, #4b5362) center / 6px 2px no-repeat, linear-gradient(#4b5362, #4b5362) center / 2px 6px no-repeat #f3f4f5; }
.l1 .tg { left: 21px; } .l2 .tg { left: 46px; }
.vbar { width: 15px; background: #c1cad0; display: flex; flex-direction: column; }
.ar { width: 15px; height: 20px; background: #9cacb4; flex: none; display: flex; align-items: center; justify-content: center; }
.ar::after { content: ""; border: 4px solid transparent; }
.up::after { border-bottom: 5px solid #111; border-top: 0; }
.dn::after { border-top: 5px solid #111; border-bottom: 0; }
.lf::after { border-right: 5px solid #6a7680; border-left: 0; }
.rt::after { border-left: 5px solid #6a7680; border-right: 0; }
.thumb { background: #5b6070; flex: none; }
.otree .thumb { height: 256px; margin-top: 274px; margin-bottom: auto; }
.hbar { height: 15px; display: flex; background: #c1cad0; flex: none; }
.hbar .ar { width: 20px; height: 15px; }
.hbar .gap { flex: 1; }
.hbar.o { width: 332px; } .hbar.o .lf { width: 12px; } .hbar.o .thumb { width: 296px; }
.hbar.t .thumb { width: 243px; }

.task { width: 331px; border-left: 1px solid #b4bac1; background: #f3f3f3; flex: none; display: flex; flex-direction: column; overflow: hidden; letter-spacing: -.2px; }
.task .phead { background: #bfc4cb; border-bottom: 1px solid #b1b6bd; padding: 1px 4px 0 7px; }
.task .chev { margin-bottom: 4px; }
.tbody { height: 746px; overflow: hidden; border-right: 1px solid #b4bac1; }
.tin { width: 440px; padding-left: 11px; padding-top: 1px; }
h3 { height: 23px; padding-top: 6px; font-size: 12.500px; line-height: 20px; color: #39434f; letter-spacing: -.28px; }
h3.first { height: 47px; padding-top: 16px; color: #000; letter-spacing: -.4px; }
h4 { height: 21px; padding: 3px 0 0 4px; font-size: 12.500px; line-height: 20px; color: #39434f; letter-spacing: -.28px; }
h4.st { height: 20px; padding-top: 3px; }
.box, .ibox { border: 1px solid #ccd2de; }
.ibox { margin-left: 4px; }
.btn { height: 27px; border: 1.500px solid #4f5d6b; border-radius: 4px; text-align: center; line-height: 26px; flex: none; }
.dis { background: #d5d6d8; border-color: #c4c6c9; color: #7d7d7d; width: 170px; margin-left: 16px; }
.wide { width: 355px; margin-left: 6px; }
.b1 { height: 41px; display: flex; padding: 6px; } .b1 .btn:first-child { width: 170px; }
.b2 { height: 131px; } .b2 .ibox { height: 105px; }
.b3 { height: 99px; } .b4 { height: 92px; } .b5 { height: 57px; padding-top: 22px; }
.cols2 { display: flex; }
.fc { display: flex; flex-direction: column; }
label { line-height: 18px; height: 18px; white-space: nowrap; }
.b2 label { line-height: 17px; }
.inp { height: 23px; border: 1.500px solid #b7c0cf; border-radius: 4px; background: #fdfdfd; padding-left: 5px; line-height: 22px; position: relative; }
.inp + label { margin-top: 7px; }
.sel i { position: absolute; right: 8px; top: 7px; border: 4.500px solid transparent; border-top: 5px solid #111; border-bottom: 0; }
.spin { line-height: 23px; }
.spin i { position: absolute; right: 3px; top: 2px; height: 17px; width: 9px; }
.spin i::before, .spin i::after { content: ""; position: absolute; left: 0; border: 4.500px solid transparent; }
.spin i::before { top: 0; border-bottom: 5px solid #111; border-top: 0; }
.spin i::after { bottom: 0; border-top: 5px solid #111; border-bottom: 0; }
.c1 { width: 164px; margin-left: 4px; padding-top: 6px; }
.c2 { width: 180px; margin-left: 12px; padding-top: 5px; }
.tall { height: 27px; line-height: 27px; }
.c3 { width: 174px; margin-left: 4px; padding-top: 4px; }
.c4 { width: 180px; margin-left: 12px; padding-top: 5px; }
.ck { height: 31px; display: flex; align-items: center; padding-left: 6px; margin-bottom: 6px; }

.right { width: 1220px; display: flex; flex-direction: column; }
.gfx { display: flex; height: 565px; }
.tools { width: 54px; padding-left: 9px; display: flex; flex-direction: column; }
.tools.r { width: 40px; padding-left: 0; }
.tb { width: 35px; height: 35px; border: 1.500px solid #98a6b3; border-radius: 4px; margin-bottom: 5px; display: flex; align-items: center; justify-content: center; flex: none; background: #fff; }
.tb svg { width: 22px; height: 22px; }
.tb.w svg { width: 29px; height: 24px; }
.r .tb svg { width: 28px; height: 28px; }
.on { width: 39px; height: 39px; border: 3px solid #98a6b0; }
.grip { height: 5px; width: 17px; margin: 7px 0 6px 12px; background: linear-gradient(90deg, transparent 1px, #fff 1px) 0 0 / 3px 3px, linear-gradient(#b4b4b4 1px, #fff 1px) 0 0 / 3px 3px; flex: none; }
.grip.g0 { margin: 6px 0 6px 12px; }
.r .grip { margin-left: 10px; }
.more { width: 35px; height: 11px; border: 1px solid #98a6b3; border-radius: 4px; display: flex; align-items: center; justify-content: center; }
.more svg { width: 9px; height: 9px; }
.m1 { margin-top: 16px; } .m2 { margin-top: 2px; }
.canvas { position: relative; width: 1126px; }
#plot { display: block; }
.ax { font: 16px Inter, Roboto, sans-serif; fill: #111; }
.tabt { font: 700 12.500px "DejaVu Sans Condensed", sans-serif; fill: #2b3644; }
.tiny { font: 700 7px "Open Sans", sans-serif; fill: #fff; }
.brand { fill: #0a0a0a; font-family: "Open Sans", sans-serif; font-weight: 700; }
.an { font-size: 33px; font-weight: 800; } .yr { font-size: 14.500px; } .stu { font-size: 14.500px; font-weight: 800; }
.tip { position: absolute; left: 113px; top: 240px; width: 76px; height: 49px; padding: 5px 0 0 7px; background: linear-gradient(100deg, #e6e9ed, #e0e5e8 25%); color: #4a4a4a; font: 14.500px/19.500px "Noto Sans", sans-serif; letter-spacing: -.25px; white-space: nowrap; box-shadow: 2px 2px 2px #8a8d92; }

.selrow { height: 40px; display: flex; align-items: center; padding: 2px 3px 0 9px; }
.vgrip { width: 5px; height: 17px; background: linear-gradient(90deg, transparent 1px, #fff 1px) 0 0 / 3px 3px, linear-gradient(#b4b4b4 1px, #fff 1px) 0 0 / 3px 3px; margin-right: auto; }
.selrow span { margin-right: 3px; letter-spacing: -.35px; }
.selrow .inp { width: 167px; }
.console { width: 1217px; margin-left: 3px; height: 183px; background: #bfc4cb; }
.console .phead { padding: 0 2px 0 9px; }
.pop { width: 12px; height: 12px; fill: none; stroke: #555; margin-left: auto; margin-right: 6px; }
.console .chev { margin-left: 0; }
.cbody { height: 150px; background: #f7f7f7; display: flex; position: relative; overflow: hidden; }
pre { font: 13.333px/16px "Liberation Mono", monospace; color: #111; margin: -9px 0 0 8px; width: 1194px; }
.cbtns { position: absolute; left: 1131px; top: 0; display: flex; gap: 6px; }
.cbtns div { width: 32px; height: 26px; border: 1.500px solid #b4b4b4; border-radius: 3px; background: #f5f5f5; display: flex; align-items: center; justify-content: center; }
.cbtns svg { width: 19px; height: 18px; }
.vbar.c .thumb { height: 20px; margin-top: 75px; }
.okc { height: 15px; background: #fff; } .okc svg { width: 14px; height: 15px; display: block; }

.bar { height: 54px; border-top: 1px solid #555; background: #1c1c1c; flex: none; display: flex; color: #fff; font-family: "Noto Sans", sans-serif; position: relative; }
.weather { display: flex; padding: 5px 0 0 12px; width: 462px; flex: none; font-size: 14px; line-height: 20.500px; }
.wn { font: 13.500px "Noto Sans", sans-serif; fill: #222; }
.wb { font: 700 11px "Open Sans", sans-serif; fill: #fff; }
.wt { margin: 3px 0 0 3.500px; }
.wt em { color: #b9b9b9; }
.apps { display: flex; align-items: center; padding-top: 4px; width: 982px; }
.win { width: 29px; height: 29px; margin-right: 17px; flex: none; }
.search { width: 274px; height: 39px; border-radius: 20px; background: #3b3b3b; border: 1px solid #4c4c4c; display: flex; align-items: center; padding-left: 15px; font-size: 15px; color: #d5d5d5; margin-right: 14px; flex: none; }
.search span { margin-left: 11px; letter-spacing: .1px; }
.art { margin-left: auto; margin-right: 2px; }
.ap { width: 33px; height: 31px; flex: none; margin-right: 22px; position: relative; }
.ap svg { width: 33px; height: 31px; display: block; }
.badge { position: absolute; left: 17px; top: -7px; width: 22px; height: 20px; border-radius: 10px; background: #f47c62; color: #222; font-size: 13px; line-height: 20px; text-align: center; letter-spacing: -.5px; }
.dot::after, .active::after { content: ""; position: absolute; left: 13px; top: 33px; width: 7px; height: 4px; border-radius: 2px; background: #999; }
.active::before { content: ""; position: absolute; left: -9px; top: -9px; width: 50px; height: 47px; background: #2b2b2b; border: 1px solid #383838; border-radius: 5px; }
.active svg { position: relative; }
.active::after { left: 6px; width: 20px; background: #f47c62; }
.av { position: absolute; left: 17px; top: -7px; width: 20px; height: 20px; border-radius: 50%; background: radial-gradient(circle at 50% 55%, #b9a79a 30%, #7c8a72 60%, #b4b4a4); }
.tray { display: flex; align-items: center; position: absolute; left: 1572px; top: 4px; height: 50px; font-size: 14px; line-height: 20px; letter-spacing: -.2px; }
.cloud { margin-left: 21px; }
.lang { margin-left: 22px; width: 30px; text-align: center; }
.wifi { margin-left: 22px; } .spk { margin-left: 9px; } .bat { margin-left: 10px; }
.clock { margin-left: 16px; width: 82px; text-align: right; letter-spacing: .2px; font-size: 14.300px; margin-top: -2px; }
```

FILE: chart.js
```js
(function () {
  var NS = 'http://www.w3.org/2000/svg';
  var X0 = 818.2, DX = 22.45, YT = 185.7, DEC = 31.86, YB = 568;

  function add(parent, name, attrs, text) {
    var e = document.createElementNS(NS, name);
    for (var k in attrs) e.setAttribute(k, attrs[k]);
    if (text !== undefined) e.textContent = text;
    parent.appendChild(e);
    return e;
  }

  // Vertical position (canvas pixels) of each residual, iterations 1 to 44.
  var series = [
    ['continuity', '#48d1b5', [440.5,442,440.3,450,453.5,457.5,461,465,469,472.5,476.5,480,484.5,488,492,495,498.5,501.5,505,507.5,511.5,515,517.5,520.5,523,525,527,529,530.5,532,533.5,535,536,537.5,538.5,539.5,540.5,541,542,543,544,545,546,547]],
    ['x-velocity', '#a59bd9', [490.5,505.5,482,461,459.5,466,469.5,473.5,477,480.5,484.2,487.5,490.5,493.5,497,499,502,504.5,507.5,510,513,515,517,519.5,521.5,523,524.5,526,527.5,528.5,530,531,532,533,534,535,535.5,536.5,537.5,538.5,539.5,540.5,542,543]],
    ['y-velocity', '#f71a0a', [529,521.5,485,463.3,462,468,471.5,475,478,481.7,485.5,489,492.5,496,499.5,502,504.5,507.5,510.5,513.5,516,518.5,520.5,523,525,526.8,528.3,529.7,531,532.3,533.5,534.5,535.5,537,537.8,538.7,539.5,540.5,541.5,542.3,543.3,544.3,545.5,546.5]],
    ['z-velocity', '#2f8fd8', [551.5,518,481,460,458.5,465.5,469,472.5,475.5,479,482.5,486,489.5,492.5,496,498,501,503.5,506.5,509.5,512,513.5,515,518,520,521.5,523,524.3,526,527,528.3,529.5,530.3,531.3,532.3,533.5,534.3,535,536,537,538,539,540.5,541.3]],
    ['k', '#fb8a0a', [398.7,484.5,464,457,459,463.5,468,470.3,471,472.7,475,478,481,484,486.3,489,492.5,496.5,500,504,508,511,514,517,519.5,522,524,525.5,527.3,529,530.5,532,533,534.3,535.3,536.5,537.5,538.5,539.7,541,542,543,544,545.3]],
    ['epsilon', '#8edb0c', [226,447,446.5,449,455.5,456.5,457,458.5,461,459.5,461.7,463,465.3,467.3,469.3,472.3,477,481,484,488.7,494,498,502,505.5,508.5,511,513.3,515.7,518,520,522,524,525.7,527,528.3,529.5,530.5,531.3,532,533,534.3,534,535.7,536.7]]
  ];

  var ax = document.getElementById('axes-layer');
  ax.setAttribute('class', 'ax');
  var d = 'M818.5 185V568.500H1829';
  for (var i = 0; i <= 12; i++) {
    var y = YT + i * DEC;
    d += 'M814 ' + y.toFixed(1) + 'h4';
    if (i < 12) [8, 6.3, 5, 3.1].forEach(function (m) {
      d += 'M816 ' + (y + DEC * (1 - Math.log10(m))).toFixed(1) + 'h3';
    });
    var e = 8 - i;
    add(ax, 'text', { x: 813, y: y + 5.3, 'text-anchor': 'end' }, '1e' + (e < 0 ? '-' : '+') + '0' + Math.abs(e));
  }
  for (var n = 0; n <= 45; n += 2.5) {
    var x = X0 + n * DX, major = n % 5 === 0;
    d += 'M' + x.toFixed(1) + ' 568v' + (major ? 5 : 3);
    if (major) add(ax, 'text', { x: x, y: 588.8, 'text-anchor': 'middle' }, n);
  }
  add(ax, 'path', { d: d, fill: 'none', stroke: '#555', 'stroke-width': 1.3 });
  add(ax, 'text', { x: 1322, y: 614.8, 'text-anchor': 'middle', textLength: 76 }, 'Iterations');

  var g = document.getElementById('series');
  series.forEach(function (s) {
    var pts = s[2].map(function (v, k) { return (X0 - 0.3 + (k + 1) * DX).toFixed(1) + ',' + v; }).join(' ');
    add(g, 'polyline', { points: pts, fill: 'none', stroke: s[1], 'stroke-width': 1.9 });
  });

  var lg = document.getElementById('legend');
  [[1018, 80], [1127.5, 79], [1236.5, 79], [1346, 79], [1455, 8.5], [1493.5, 57]].forEach(function (p, k) {
    add(lg, 'path', { d: 'M' + p[0] + ' 649h16.500', stroke: series[k][1], 'stroke-width': 2 });
    add(lg, 'text', { x: p[0] + 21, y: 654, textLength: p[1] }, series[k][0]);
  });
})();
```
